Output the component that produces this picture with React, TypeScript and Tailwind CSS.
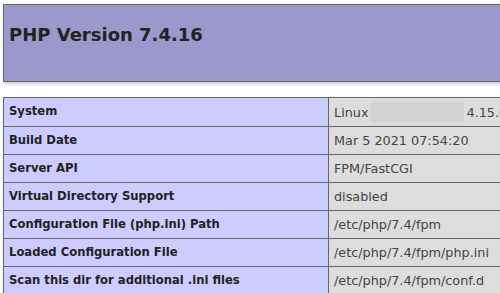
export default function App() {
  const rows: [string, React.ReactNode][] = [
    [
      'System',
      <>
        Linux
        <span className="inline-block w-[94px] h-[20px] ml-[2px] mr-[2px] align-[-5px] bg-[#d2d2d2]" />
        4.15.0-135-generic #139-Ubuntu SMP
      </>,
    ],
    ['Build Date', 'Mar 5 2021 07:54:20'],
    ['Server API', 'FPM/FastCGI'],
    ['Virtual Directory Support', 'disabled'],
    ['Configuration File (php.ini) Path', '/etc/php/7.4/fpm'],
    ['Loaded Configuration File', '/etc/php/7.4/fpm/php.ini'],
    ['Scan this dir for additional .ini files', '/etc/php/7.4/fpm/conf.d'],
  ];

  return (
    <div className="w-[500px] h-[293px] overflow-hidden bg-white text-[#222]" style={{ fontFamily: '"DejaVu Sans", Verdana, sans-serif' }}>
      <div className="w-[934px] ml-[3px] mt-[4px]">
        {/* Header */}
        <div className="h-[78px] border border-[#666] bg-[#99c] px-[5px] pt-[19px] shadow-[1px_2px_3px_#ccc]">
          <h1 className="text-[18px] leading-[22px] font-bold text-[#222]">PHP Version 7.4.16</h1>
        </div>

        {/* Info table */}
        <div className="mt-[15px] grid grid-cols-[325px_1fr] border-t border-l border-[#666] leading-[19px] shadow-[1px_2px_3px_#ccc]">
          {rows.map(([label, value]) => (
            <div key={label} className="contents">
              <div className="border-r border-b border-[#666] bg-[#ccf] px-[5px] py-[4px] text-[11.6px] font-bold text-[#222] whitespace-nowrap">
                {label}
              </div>
              <div className="border-r border-b border-[#666] bg-[#ddd] px-[5px] py-[4px] text-[12.8px] text-[#444] whitespace-nowrap">
                {value}
              </div>
            </div>
          ))}
        </div>
      </div>
    </div>
  );
}
